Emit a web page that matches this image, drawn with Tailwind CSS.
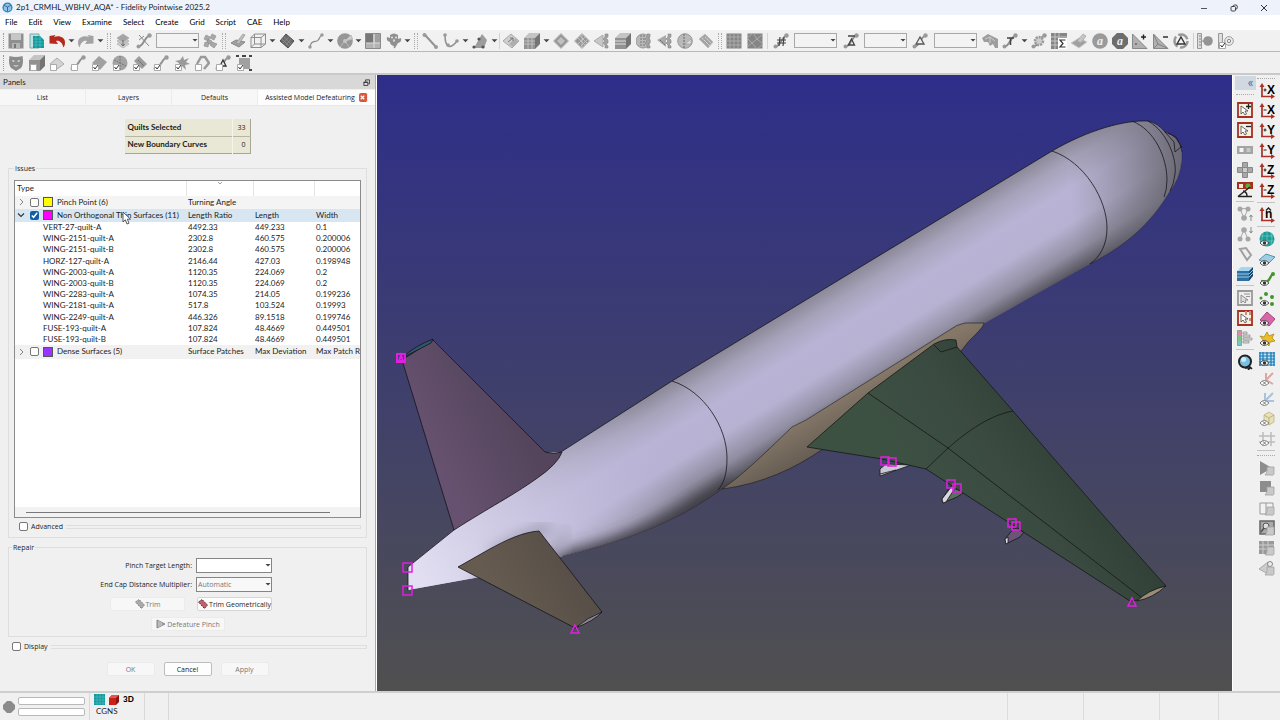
<!DOCTYPE html>
<html lang="en">
<head>
  <meta charset="UTF-8" />
  <meta name="viewport" content="width=device-width, initial-scale=1.0"/>
  <title>2p1_CRMHL_WBHV_AQA* - Fidelity Pointwise 2025.2</title>
  <script src="https://cdn.jsdelivr.net/npm/@tailwindcss/browser@4"></script>
</head>
<body class="flex h-screen flex-col overflow-hidden bg-[#f0f0f0] font-['Lato','Open_Sans',sans-serif] text-[8px] leading-[11px] text-[#1c1c1c]">

  <!-- Shared icon parts -->
  <svg class="hidden" aria-hidden="true">
    <symbol id="caret" viewBox="0 0 6 6"><path d="M.500 2h5L3 4.500z" fill="#444"/></symbol>
    <symbol id="conn" viewBox="0 0 16 16"><path d="M2.500 13.500C8 13 7 6 13 2.500" fill="none" stroke="#909090" stroke-width="2"/><circle cx="2.500" cy="13.500" r="2" fill="#9a9a9a"/><circle cx="13.500" cy="2.500" r="2.200" fill="#9a9a9a"/></symbol>
    <symbol id="quilt" viewBox="0 0 16 16"><path d="M8 .500L15.500 8 8 15.500.500 8z" fill="#979797" stroke="#bdbdbd"/></symbol>
    <symbol id="cube" viewBox="0 0 16 16"><path d="M0 5h11v11H0z" fill="#929292"/><path d="M0 5l5-5h11l-5 5z" fill="#c4c4c4"/><path d="M11 5l5-5v11l-5 5z" fill="#747474"/></symbol>
    <symbol id="check" viewBox="0 0 16 16"><path d="M1.500 9.500h6v6h-6z" fill="#fff" stroke="#aaa"/><path d="M2.500 12l1.500 2 3-4" fill="none" stroke="#333"/></symbol>
    <symbol id="box" viewBox="0 0 16 16"><path d="M1.500 9.500h6v6h-6z" fill="#fff" stroke="#aaa"/></symbol>
    <symbol id="chain" viewBox="0 0 16 16"><path d="M11 1h3v3l-2 1 2 2v3l-2 1 2 2v2h-3v-3l-2-2 2-2V8L9 6l2-2z" fill="#a2a2a2" stroke="#888" stroke-width=".6"/></symbol>
    <symbol id="axes" viewBox="0 0 16 16"><path d="M3 14V3M2 13.500h12" fill="none" stroke="#a83228" stroke-width="1.700"/><path d="M3 0L.500 4h5zM16 13.500l-4-2.500v5z" fill="#a83228"/></symbol>
    <symbol id="eye" viewBox="0 0 16 16"><path d="M1 12q4-5 9 0-5 5-9 0z" fill="#fff" stroke="#444" stroke-width=".9"/><circle cx="5.500" cy="12" r="1.700" fill="#333"/></symbol>
    <symbol id="eye-off" viewBox="0 0 16 16"><path d="M1 12q4-5 9 0-5 5-9 0z" fill="#fff" stroke="#777" stroke-width=".9"/><path d="M4 10.500l3 3m0-3l-3 3" stroke="#555" stroke-width=".8"/></symbol>
    <symbol id="scroll" viewBox="0 0 16 16"><path d="M8 7h7v7q-1 2-3 1H6q2-2 2-4z" fill="#c9c9c9" stroke="#a2a2a2" stroke-width=".8"/></symbol>
  </svg>

  <!-- Title bar -->
  <header class="flex h-[15px] shrink-0 items-center gap-[3px] bg-[#eef2fa] px-[2px]">
    <svg class="size-[11px]" viewBox="0 0 12 12"><circle cx="6" cy="6" r="5.500" fill="#2d7fb8"/><path d="M6 1.500l4 2v5l-4 2.200-4-2.200v-5z" fill="#8fc3e6"/><path d="M2 3.500l4 2 4-2M6 5.500v5" fill="none" stroke="#17507c" stroke-width=".8"/></svg>
    <h1 class="flex-1">2p1_CRMHL_WBHV_AQA* - Fidelity Pointwise 2025.2</h1>
    <div class="flex gap-[20px] pr-[9px] [&_button]:grid [&_button]:h-3 [&_button]:w-[10px] [&_button]:place-items-center [&_svg]:size-2">
      <button aria-label="Minimize"><svg viewBox="0 0 8 8"><path d="M1 4.500h6" stroke="#555"/></svg></button>
      <button aria-label="Restore"><svg viewBox="0 0 8 8" fill="none" stroke="#333" stroke-width=".9"><rect x="1" y="2.500" width="4.500" height="4.500" rx="1"/><path d="M3 2.500q0-1.500 1.500-1.500H6q1.200 0 1.200 1.200V4q0 1.200-1.500 1.200"/></svg></button>
      <button aria-label="Close"><svg viewBox="0 0 8 8"><path d="M1 1l6 6M7 1L1 7" stroke="#333"/></svg></button>
    </div>
  </header>

  <!-- Menu -->
  <nav class="flex h-[15px] shrink-0 items-center gap-[11px] bg-white px-[5px] text-black">
    <a href="#">File</a><a href="#">Edit</a><a href="#">View</a><a href="#">Examine</a><a href="#">Select</a><a href="#">Create</a><a href="#">Grid</a><a href="#">Script</a><a href="#">CAE</a><a href="#">Help</a>
  </nav>

  <!-- Main toolbar -->
  <div class="flex h-[22px] shrink-0 items-center border-b border-[#b8b8b8] bg-[#f1f1f1] [&_button]:grid [&_button]:h-5 [&_button]:place-items-center [&_svg]:size-4 [&_button.drop_svg]:size-[7px] [&_select]:block [&_select]:h-[15px] [&_select]:w-[43px] [&_select]:appearance-none [&_select]:border [&_select]:border-[#a8a8a8] [&_select]:bg-[#f3f3f3]">
    <div class="mr-[2px] ml-[3px] h-4 border-l border-dotted border-[#999]"></div>
    <div class="flex w-[99px] items-center justify-between [&_button]:w-5 [&_button.drop]:w-2">
      <button title="Save"><svg viewBox="0 0 16 16"><path d="M.500.500h15v15H.500z" fill="#8f8f8f"/><path d="M3 1h10v6H3z" fill="#c6c6c6"/><path d="M4 10h8v6H4z" fill="#b5b5b5"/><path d="M6 11h2v4H6z" fill="#777"/></svg></button>
      <button title="New grid"><svg viewBox="0 0 16 16"><path d="M1 1h9v14H1z" fill="#bfe3e3" stroke="#7aa"/><path d="M4 3h7l4 4v8H4z" fill="#12979b"/><path d="M4 6h8M4 9h11M4 12h11M7 3v12M11 3v12" stroke="#55c6c8" stroke-width=".6"/></svg></button>
      <button title="Undo"><svg viewBox="0 0 16 16"><path d="M.500 3l6-1-1.500 2c5-2 11 0 11 5.500 0 2-.500 3.500-1.500 5C13 9 10 7 7 8l2 3-8.500-.500z" fill="#b8281c"/></svg></button>
      <button class="drop" aria-label="Undo list"><svg><use href="#caret"/></svg></button>
      <button title="Redo"><svg viewBox="0 0 16 16"><path d="M15.500 3l-6-1 1.500 2C6 2 0 4 0 9.500c0 2 .500 3.500 1.500 5C3 9 6 7 9 8l-2 3 8.500-.500z" fill="#a3a3a3"/></svg></button>
      <button class="drop" aria-label="Redo list"><svg><use href="#caret"/></svg></button>
    </div>
    <div class="mr-[2px] ml-[2px] h-4 w-[4px] border-r border-l border-dotted border-[#aaa]"></div>
    <div class="flex w-[107px] items-center justify-between [&_button]:w-5">
      <button title="Layers"><svg viewBox="0 0 16 16" stroke="#aaa" stroke-width=".7"><path d="M8 7l6 4-6 4-6-4z" fill="#d0d0d0"/><path d="M8 4l6 4-6 4-6-4z" fill="#c4c4c4"/><path d="M8 1l6 4-6 4-6-4z" fill="#a5a5a5"/><path d="M8 7v6M6 11l2 2 2-2" fill="none" stroke="#555"/></svg></button>
      <button title="Show connectors"><svg viewBox="0 0 16 16"><use href="#conn"/><path d="M3 2l10 11M3 7l5-4" stroke="#888"/></svg></button>
      <span class="relative"><select aria-label="Layer"><option></option></select><svg class="absolute top-1 right-px size-[6px]!"><use href="#caret"/></svg></span>
      <button title="Layer manager"><svg viewBox="0 0 16 16" fill="#a8a8a8" stroke="#8a8a8a" stroke-width=".6"><path d="M4 2l4 2-2 4-4-2zM10 1l4 2-2 4-4-2zM3 9l4 1-1 4-4-1zM10 9l5 2-3 4-4-3zM6 6l4 2-2 3-3-2z"/></svg></button>
    </div>
    <div class="mr-[2px] ml-[2px] h-4 w-[4px] border-r border-l border-dotted border-[#aaa]"></div>
    <div class="flex w-[184px] items-center justify-between [&_button]:w-5 [&_button.drop]:w-2">
      <button title="Draw on database"><svg viewBox="0 0 16 16"><path d="M1 10l5-3 9 2-6 5z" fill="#a0a0a0" stroke="#888"/><path d="M6 10l7-9 2 1-6 9z" fill="#bdbdbd" stroke="#8b8b8b" stroke-width=".6"/></svg></button>
      <button title="Box"><svg viewBox="0 0 16 16" fill="none" stroke="#8e8e8e"><path d="M1 4.500h10v10H1zM4.500 1h11v10h-11zM1 4.500L4.500 1M11 4.500L15.500 1M11 14.500l4.500-3.500M1 14.500L4.500 11"/></svg></button>
      <button class="drop" aria-label="Shape list"><svg><use href="#caret"/></svg></button>
      <button title="Quilt"><svg viewBox="0 0 16 16"><path d="M7 1l8 7-6 7-8-7z" fill="#6b6b6b" stroke="#505050"/><path d="M5 4l7 7M3 6l7 7M10 4l-6 6M12 6l-5 6" stroke="#9b9b9b" stroke-width=".6"/></svg></button>
      <button class="drop" aria-label="Quilt list"><svg><use href="#caret"/></svg></button>
      <button title="Curve"><svg viewBox="0 0 16 16"><path d="M2 14c1-6 4-5 7-6s2-5 5-6" fill="none" stroke="#8c8c8c" stroke-width="1.300"/><circle cx="2" cy="14" r="1.700" fill="#999"/><circle cx="14" cy="2" r="1.700" fill="#999"/></svg></button>
      <button class="drop" aria-label="Curve list"><svg><use href="#caret"/></svg></button>
      <button title="Surface"><svg viewBox="0 0 16 16"><circle cx="8" cy="8" r="7.800" fill="#979797"/><path d="M8 8l6-6 1.500 4zM8 8l-5 6M8 8l4 6" fill="#ccc" stroke="#bbb"/><circle cx="8" cy="8" r="2" fill="#c5c5c5"/></svg></button>
      <button class="drop" aria-label="Surface list"><svg><use href="#caret"/></svg></button>
      <button title="Domains"><svg viewBox="0 0 16 16"><path d="M.500.500h15v15H.500z" fill="#b4b4b4" stroke="#8a8a8a"/><path d="M1 1h7v9H1z" fill="#777"/><path d="M10 1h5v9h-5z" fill="#a0a0a0"/><path d="M1 10h14M9 1v14" stroke="#ddd"/></svg></button>
      <button title="Overset"><svg viewBox="0 0 16 16"><path d="M4 2q4-3 8 0v4l3-1q1 4-3 5l-3 5q-2 1-1-2-4-1-4-4Q0 8 1 4l3 1z" fill="#909090"/><circle cx="6" cy="4.500" r=".9" fill="#eee"/><circle cx="10" cy="4.500" r=".9" fill="#eee"/><ellipse cx="8" cy="7.500" rx="1" ry="1.300" fill="#ddd"/></svg></button>
      <button class="drop" aria-label="Overset list"><svg><use href="#caret"/></svg></button>
    </div>
    <div class="mr-[2px] ml-[2px] h-4 w-[4px] border-r border-l border-dotted border-[#aaa]"></div>
    <div class="flex w-[78px] items-center justify-between [&_button]:w-5 [&_button.drop]:w-2">
      <button title="Two point curve"><svg viewBox="0 0 16 16"><path d="M3 2l11 12" stroke="#929292" stroke-width="2"/><circle cx="2.500" cy="2" r="2" fill="#9a9a9a"/><circle cx="14" cy="14" r="2" fill="#9a9a9a"/></svg></button>
      <button title="Curve through points"><svg viewBox="0 0 16 16"><path d="M2 2c0 14 6 14 12 6" fill="none" stroke="#929292" stroke-width="1.600"/><circle cx="2" cy="2" r="1.800" fill="#999"/><circle cx="5" cy="12" r="1.800" fill="#999"/><circle cx="14" cy="8" r="1.800" fill="#999"/></svg></button>
      <button class="drop" aria-label="Curve type"><svg><use href="#caret"/></svg></button>
      <button title="Surface from points"><svg viewBox="0 0 16 16"><path d="M10 1l5 6-3 8H2l5-9z" fill="#9c9c9c"/><g fill="#555"><circle cx="7" cy="6" r="1.600"/><circle cx="2" cy="14" r="1.600"/><circle cx="11" cy="14" r="1.600"/></g></svg></button>
      <button class="drop" aria-label="Surface type"><svg><use href="#caret"/></svg></button>
    </div>
    <div class="mx-px h-4 border-l border-[#d4d4d4]"></div>
    <div class="flex w-[215px] items-center justify-between [&_button]:w-5 [&_button.drop]:w-2">
      <button title="Assemble domain"><svg viewBox="0 0 16 16"><path d="M0 8l8-7 8 7-7 7z" fill="#cfcfcf" stroke="#a8a8a8"/><path d="M6 11l7-6 2 4-5 5z" fill="#aeaeae"/><path d="M5 9l5-4M10 5v3M10 5H7" stroke="#777" fill="none"/></svg></button>
      <button title="Assemble block"><svg viewBox="0 0 16 16"><use href="#cube"/><path d="M0 8h11M0 11h11M4 5v11M8 5v11" stroke="#d0d0d0" stroke-width=".7"/></svg></button>
      <button class="drop" aria-label="Block list"><svg><use href="#caret"/></svg></button>
      <button title="Structured domain"><svg viewBox="0 0 16 16"><use href="#quilt"/><path d="M8 4l4 4-4 4-4-4z" fill="#c0c0c0"/></svg></button>
      <button title="Unstructured domain"><svg viewBox="0 0 16 16"><use href="#quilt"/><path d="M4 5l7 7M6 3l7 7M11 4l-7 7M13 7l-6 6M8 1v14" stroke="#d0d0d0" stroke-width=".7"/></svg></button>
      <button title="Extrude domain"><svg viewBox="0 0 16 16"><path d="M0 8l9-6v12z" fill="#c7c7c7" stroke="#aaa"/><use href="#chain"/></svg></button>
      <button title="Extrude block"><svg viewBox="0 0 16 16"><use href="#cube"/><path d="M0 8h11M0 11h11" stroke="#ddd"/></svg></button>
      <button title="Rotate extrusion"><svg viewBox="0 0 16 16"><circle cx="7" cy="8" r="7" fill="#b9b9b9" stroke="#999"/><path d="M5 2v12M8 2v12" stroke="#777" stroke-dasharray="2 1"/><use href="#chain"/></svg></button>
      <button title="Path extrusion"><svg viewBox="0 0 16 16"><path d="M0 7l9-5v12z" fill="#a9a9a9"/><path d="M3 7l5 5" stroke="#666" stroke-dasharray="2 1"/><use href="#chain"/></svg></button>
      <button title="Revolve"><svg viewBox="0 0 16 16"><circle cx="8" cy="8" r="7.300" fill="#b9b9b9" stroke="#999"/><path d="M7 1v14" stroke="#666" stroke-dasharray="2 1"/><path d="M8 11l6-5v5z" fill="#ddd" stroke="#999" stroke-width=".6"/></svg></button>
      <button title="Translate"><svg viewBox="0 0 16 16"><path d="M1 6l6-5 8 8-5 6z" fill="#a4a4a4" stroke="#c0c0c0"/><path d="M4 5l8 8M7 4l6 6" stroke="#ddd" stroke-dasharray="2 1"/></svg></button>
    </div>
    <div class="mr-[2px] ml-[2px] h-4 w-[4px] border-r border-l border-dotted border-[#aaa]"></div>
    <div class="flex w-[41px] items-center justify-between [&_button]:w-5">
      <button title="Structured"><svg viewBox="0 0 16 16"><path d="M.500.500h15v15H.500z" fill="#858585"/><path d="M0 4h16M0 8h16M0 12h16M4 0v16M8 0v16M12 0v16" stroke="#b4b4b4" stroke-width=".8"/></svg></button>
      <button title="Unstructured"><svg viewBox="0 0 16 16"><path d="M.500.500h15v15H.500z" fill="#858585"/><path d="M0 5l6-5 4 6 6-5M0 5l5 5 5-4 6 5M0 14l5-4 5 6 6-5" fill="none" stroke="#b4b4b4" stroke-width=".8"/></svg></button>
    </div>
    <div class="mr-[3px] ml-[2px] h-4 border-l border-[#d4d4d4]"></div>
    <div class="flex w-[420px] items-center justify-between [&_button]:w-5 [&_button.drop]:w-2 [&_span]:mx-[3px]">
      <button title="Dimension"><svg viewBox="0 0 16 16"><use href="#conn"/><path d="M7 4L6 13M11 4l-1 9M4 7h9M4 10h9" stroke="#444" stroke-width="1.200"/></svg></button>
      <span class="relative"><select aria-label="Dimension"><option></option></select><svg class="absolute top-1 right-px size-[6px]!"><use href="#caret"/></svg></span>
      <button title="Average spacing"><svg viewBox="0 0 16 16"><use href="#conn"/><path d="M5 3h7M8.500 6l3 6h-6z" fill="none" stroke="#444" stroke-width="1.300"/></svg></button>
      <span class="relative"><select aria-label="Average spacing"><option></option></select><svg class="absolute top-1 right-px size-[6px]!"><use href="#caret"/></svg></span>
      <button title="Spacing"><svg viewBox="0 0 16 16"><use href="#conn"/><path d="M8 4l4 7H4z" fill="#eee" stroke="#555" stroke-width="1.300"/></svg></button>
      <span class="relative"><select aria-label="Spacing"><option></option></select><svg class="absolute top-1 right-px size-[6px]!"><use href="#caret"/></svg></span>
      <button title="Split"><svg viewBox="0 0 16 16"><path d="M0 5l6-4 10 5v9h-3l-2-4-3 2-2-4H2z" fill="#9d9d9d"/><path d="M3 6l5-2 5 4M8 4v6" fill="none" stroke="#ccc"/></svg></button>
      <button title="Trim"><svg viewBox="0 0 16 16"><use href="#conn"/><path d="M5 5h7M8.500 5v7" stroke="#444" stroke-width="1.500"/></svg></button>
      <button class="drop" aria-label="Trim list"><svg><use href="#caret"/></svg></button>
      <button title="Solver"><svg viewBox="0 0 16 16"><use href="#conn"/><circle cx="8" cy="8" r="4" fill="#ccc" stroke="#999" stroke-width="2.500" stroke-dasharray="2 1"/></svg></button>
      <button title="Statistics"><svg viewBox="0 0 16 16"><path d="M0 0h16v16H0z" fill="#858585"/><path d="M0 4h16M0 8h16M0 12h16M4 0v16M8 0v16" stroke="#c5c5c5"/><path d="M7 5h9v11H7z" fill="#fff"/><path d="M14.500 7H9l3 3.500L9 14h5.500" fill="none" stroke="#333" stroke-width="1.200"/></svg></button>
      <button title="Apply attributes"><svg viewBox="0 0 16 16"><path d="M0 10l8-5 8 4-8 6z" fill="#a0a0a0" stroke="#ccc"/><path d="M6 8l6-7 3 2-5 7z" fill="#c5c5c5" stroke="#999" stroke-width=".6"/></svg></button>
      <button title="Attributes"><svg viewBox="0 0 16 16"><circle cx="8" cy="8" r="7.800" fill="#9a9a9a"/><text x="8" y="12" text-anchor="middle" font-family="Liberation Serif" font-style="italic" font-weight="bold" font-size="12" fill="#eee">a</text></svg></button>
      <button title="Default attributes"><svg viewBox="0 0 16 16"><path d="M5 0h6l5 5v6l-5 5H5l-5-5V5z" fill="#6d6d6d"/><text x="8" y="12" text-anchor="middle" font-family="Liberation Serif" font-style="italic" font-weight="bold" font-size="12" fill="#eee">a</text></svg></button>
      <button title="Refine"><svg viewBox="0 0 16 16"><path d="M.500 1v14.500H15z" fill="#b0b0b0" stroke="#888"/><circle cx="4" cy="11" r="1" fill="#666"/><path d="M9 4h5M11.500 1.500v5" stroke="#222" stroke-width="1.400"/></svg></button>
      <button title="Coarsen"><svg viewBox="0 0 16 16"><path d="M.500 1v14.500H15z" fill="#b0b0b0" stroke="#888"/><path d="M1 2l4 9 9 4M1 15l4-4" fill="none" stroke="#777" stroke-width=".8"/><path d="M10 4h5" stroke="#222" stroke-width="1.400"/></svg></button>
      <button title="Remesh"><svg viewBox="0 0 16 16"><circle cx="8" cy="8" r="6.500" fill="none" stroke="#999" stroke-width="2.500" stroke-dasharray="11 2.500"/><path d="M8 4l4 7H4z" fill="#eee" stroke="#333" stroke-width="1.400"/></svg></button>
    </div>
    <div class="mr-px ml-[2px] h-4 border-l border-[#d0d0d0]"></div>
    <div class="flex w-[41px] items-center justify-between [&_button]:w-5">
      <button title="Measure"><svg viewBox="0 0 16 16"><path d="M.500.500h4v15h-4z" fill="#ddd" stroke="#999"/><path d="M2 3h2M2 6h2M2 9h2M2 12h2M5 8h3" stroke="#888"/><circle cx="11" cy="8" r="4.800" fill="#949494"/></svg></button>
      <button title="Examine metric"><svg viewBox="0 0 16 16"><path d="M.500.500h4v15h-4z" fill="#ddd" stroke="#999"/><circle cx="11" cy="8" r="4.300" fill="#eee" stroke="#999"/><circle cx="11" cy="8" r="1.700" fill="none" stroke="#888"/><use href="#check"/></svg></button>
    </div>
  </div>

  <!-- Mask toolbar -->
  <div class="flex h-[23px] shrink-0 items-center border-b-2 border-[#c9c9c9] [&_button]:grid [&_button]:h-5 [&_button]:w-5 [&_button]:place-items-center [&_svg]:size-4">
    <div class="mr-[2px] ml-[3px] h-4 border-l border-dotted border-[#999]"></div>
    <div class="flex w-[248px] items-center justify-between">
      <button title="Mask"><svg viewBox="0 0 16 16"><path d="M1.500 1q6.500 2 13 0Q16 9 13 13l-5 3-5-3Q0 9 1.500 1z" fill="#8b8b8b"/><path d="M4 5l3 1-2 1zM12 5L9 6l2 1zM5 10q3 3 6 0-3 1-6 0z" fill="#eee"/></svg></button>
      <button title="Blocks"><svg viewBox="0 0 16 16"><use href="#cube"/><use href="#box"/></svg></button>
      <button title="Domains"><svg viewBox="0 0 16 16"><path d="M1 9l7-6 7 6-7 5z" fill="#d4d4d4" stroke="#aaa"/><use href="#box"/></svg></button>
      <button title="Connectors"><svg viewBox="0 0 16 16"><use href="#conn"/><use href="#box"/></svg></button>
      <button title="Database"><svg viewBox="0 0 16 16"><path d="M1 8l7-7 8 6-7 8z" fill="#a0a0a0"/><use href="#check"/></svg></button>
      <button title="Models"><svg viewBox="0 0 16 16"><circle cx="8" cy="8" r="7.500" fill="#a3a3a3"/><path d="M8 1v14M2 5l12 6" stroke="#777" stroke-dasharray="2 1"/><use href="#check"/></svg></button>
      <button title="Quilts"><svg viewBox="0 0 16 16"><path d="M2 6l5-5 8 8-5 5z" fill="#9c9c9c"/><path d="M6 5l6 6" stroke="#666" stroke-dasharray="2 1"/><use href="#check"/></svg></button>
      <button title="Curves"><svg viewBox="0 0 16 16"><use href="#conn"/><use href="#check"/></svg></button>
      <button title="Points"><svg viewBox="0 0 16 16"><path d="M9 1l1 4 5-2-3 4 4 2-5 1 1 5-4-4-4 1 1-4-4-2 5-1z" fill="#9a9a9a"/><use href="#check"/></svg></button>
      <button title="Boundaries"><svg viewBox="0 0 16 16"><path d="M3 9l4-7h4l4 6-5 6" fill="none" stroke="#9a9a9a" stroke-width="2.500"/><use href="#box"/></svg></button>
      <button title="Spacings"><svg viewBox="0 0 16 16"><use href="#conn"/><path d="M8 5l3 6H5z" fill="#eee" stroke="#333" stroke-width="1.300"/><use href="#box"/></svg></button>
      <button title="Sources"><svg viewBox="0 0 16 16"><path d="M3 3h11v11H3z" fill="#a0a0a0"/><path d="M0 1h3M13 1h3M13 15h3M6 1h4" stroke="#444" stroke-width="2"/><use href="#check"/></svg></button>
    </div>
  </div>

  <main class="flex min-h-0 flex-1">
    <!-- Panels -->
    <aside class="flex w-[375px] shrink-0 flex-col">
      <div class="flex h-[14px] shrink-0 items-center justify-between bg-[#d8d8d8] pr-[5px] pl-[3px]">
        <h2>Panels</h2>
        <button aria-label="Float panel"><svg class="size-[7px]" viewBox="0 0 8 8" fill="none" stroke="#333"><path d="M1 3.500h4.500v4H1zM3 3V1h4.500v4.500H6M1 4h4"/></svg></button>
      </div>
      <div role="tablist" class="mt-px flex h-4 shrink-0 border-b border-[#e8e8e8] bg-[#f7f7f7] font-['Open_Sans',sans-serif] text-[7px] [&_button]:w-[86px] [&_button]:border-r [&_button]:border-[#ececec]">
        <button role="tab">List</button>
        <button role="tab">Layers</button>
        <button role="tab">Defaults</button>
        <div class="flex flex-1 items-center justify-center gap-[4px] bg-[#fdfdfd]">
          <span role="tab" aria-selected="true">Assisted Model Defeaturing</span>
          <button aria-label="Close tab" class="grid size-[9px] max-w-[9px] place-items-center rounded-[2px] bg-[#d9583c]"><svg class="size-[7px]" viewBox="0 0 8 8"><path d="M2 2l4 4M6 2L2 6" stroke="#fff" stroke-width="1.400"/></svg></button>
        </div>
      </div>

      <form class="flex min-h-0 flex-1 flex-col px-2 pb-[15px] font-['Open_Sans',sans-serif] text-[7px]" onsubmit="return false">
        <table class="mx-auto mt-[13px] w-[126px] shrink-0 border-r border-b border-[#a9a793] bg-[#e9e7d5] [&_td]:border-l [&_td]:border-[#f6f5ea] [&_td]:pr-1 [&_td]:text-right [&_th]:pl-[3px] [&_th]:text-left [&_th]:font-['Lato','Open_Sans',sans-serif] [&_th]:text-[8px] [&_th]:font-bold [&_th]:whitespace-nowrap [&_tr]:h-[17px]">
          <tr class="border-b border-[#b9b7a2]"><th scope="row">Quilts Selected</th><td>33</td></tr>
          <tr><th scope="row">New Boundary Curves</th><td>0</td></tr>
        </table>

        <!-- Issues -->
        <fieldset class="mt-[9px] flex min-h-0 min-w-0 flex-1 flex-col border border-[#dedede] px-[5px] pt-[5px] pb-[5px]">
          <legend class="px-[1px] leading-[12px]">Issues</legend>
          <div class="relative flex min-h-0 flex-1 flex-col border border-[#8b8b8b] bg-white font-['Lato','Open_Sans',sans-serif] text-[8px]">
            <div class="min-h-0 flex-1 overflow-hidden">
              <table class="h-[178px] w-[390px] table-fixed text-left whitespace-nowrap [&_.group_td:first-child]:pl-[2px] [&_tbody_tr]:h-[11px] [&_tbody_tr.group]:h-[13px] [&_td]:pl-[2px] [&_td:first-child]:pl-[28px] [&_th]:font-normal">
                <colgroup><col class="w-[171px]"><col class="w-[67px]"><col class="w-[61px]"><col></colgroup>
                <thead>
                  <tr class="h-[15px] [&_th]:border-r [&_th]:border-[#e4e4e4]">
                    <th class="pl-[2px]">Type</th>
                    <th aria-label="Value" class="align-top"><svg class="mx-auto h-1 w-[6px]" viewBox="0 0 6 4"><path d="M1 1l2 2 2-2" fill="none" stroke="#888" stroke-width=".8"/></svg></th>
                    <th></th><th></th>
                  </tr>
                </thead>
                <tbody>
                  <tr class="group bg-[#f4f4f4]">
                    <td><label class="flex items-center gap-[4px]"><svg class="mr-px size-2" viewBox="0 0 8 8"><path d="M3 1l3 3-3 3" fill="none" stroke="#777" stroke-width=".9"/></svg><input type="checkbox" class="size-[9px] appearance-none rounded-[2px] border border-[#777] bg-white"><i class="size-[10px] border border-[#555] bg-[#ffff00]"></i>Pinch Point (6)</label></td>
                    <td>Turning Angle</td><td></td><td></td>
                  </tr>
                  <tr class="group bg-[#d8e6f2]">
                    <td><label class="flex items-center gap-[4px]"><svg class="mr-px size-2" viewBox="0 0 8 8"><path d="M1 2.500l3 3 3-3" fill="none" stroke="#333" stroke-width="1.100"/></svg><input type="checkbox" checked class="size-[9px] accent-[#0f5ea8]"><i class="size-[10px] border border-[#555] bg-[#ff00ff]"></i>Non Orthogonal Thin Surfaces (11)</label></td>
                    <td>Length Ratio</td><td>Length</td><td>Width</td>
                  </tr>
                  <tr><td>VERT-27-quilt-A</td><td>4492.33</td><td>449.233</td><td>0.1</td></tr>
                  <tr><td>WING-2151-quilt-A</td><td>2302.8</td><td>460.575</td><td>0.200006</td></tr>
                  <tr><td>WING-2151-quilt-B</td><td>2302.8</td><td>460.575</td><td>0.200006</td></tr>
                  <tr><td>HORZ-127-quilt-A</td><td>2146.44</td><td>427.03</td><td>0.198948</td></tr>
                  <tr><td>WING-2003-quilt-A</td><td>1120.35</td><td>224.069</td><td>0.2</td></tr>
                  <tr><td>WING-2003-quilt-B</td><td>1120.35</td><td>224.069</td><td>0.2</td></tr>
                  <tr><td>WING-2283-quilt-A</td><td>1074.35</td><td>214.05</td><td>0.199236</td></tr>
                  <tr><td>WING-2181-quilt-A</td><td>517.8</td><td>103.524</td><td>0.19993</td></tr>
                  <tr><td>WING-2249-quilt-A</td><td>446.326</td><td>89.1518</td><td>0.199746</td></tr>
                  <tr><td>FUSE-193-quilt-A</td><td>107.824</td><td>48.4669</td><td>0.449501</td></tr>
                  <tr><td>FUSE-193-quilt-B</td><td>107.824</td><td>48.4669</td><td>0.449501</td></tr>
                  <tr class="group bg-[#f1f1f1]">
                    <td><label class="flex items-center gap-[4px]"><svg class="mr-px size-2" viewBox="0 0 8 8"><path d="M3 1l3 3-3 3" fill="none" stroke="#777" stroke-width=".9"/></svg><input type="checkbox" class="size-[9px] appearance-none rounded-[2px] border border-[#777] bg-white"><i class="size-[10px] border border-[#555] bg-[#9933ff]"></i>Dense Surfaces (5)</label></td>
                    <td>Surface Patches</td><td>Max Deviation</td><td>Max Patch Ratio</td>
                  </tr>
                </tbody>
              </table>
            </div>
            <div class="flex h-[10px] shrink-0 items-center bg-[#f2f2f2] pr-[30px] pl-[11px]"><div class="h-px flex-1 bg-[#777]"></div></div>
            <!-- Mouse pointer -->
            <svg class="absolute top-[30px] left-[107px] h-[14px] w-[9px]" viewBox="0 0 9 14"><path d="M1 1v10l2.300-2.200L5 13l2-.8-1.700-4H8.500z" fill="#fff" stroke="#333" stroke-width=".8"/></svg>
          </div>
          <div class="mt-[3px] flex items-center gap-[3px] pl-[5px]">
            <input id="advanced" type="checkbox" class="size-[9px] appearance-none rounded-[2px] border border-[#777] bg-white">
            <label for="advanced">Advanced</label>
            <div class="h-1 flex-1 border border-l-0 border-[#dedede]"></div>
          </div>
        </fieldset>

        <!-- Repair -->
        <fieldset class="mt-1 flex min-w-0 shrink-0 flex-col border border-[#dedede] pb-[5px]">
          <legend class="ml-[3px] px-[1px]">Repair</legend>
          <div class="grid grid-cols-[183px_76px] items-center gap-x-[4px] gap-y-[4px] pt-[5px] [&_label]:text-right">
            <label for="pinch">Pinch Target Length:</label>
            <div class="relative"><input id="pinch" type="text" class="block h-[15px] w-full border border-[#858585] bg-white px-[2px]"><svg class="absolute top-1 right-px size-[6px]"><use href="#caret"/></svg></div>
            <label for="cap">End Cap Distance Multiplier:</label>
            <div class="relative"><select id="cap" class="block h-[15px] w-full appearance-none border border-[#858585] bg-[#f8f8f8] px-[1px] text-[#777]"><option>Automatic</option></select><svg class="absolute top-1 right-px size-[6px]"><use href="#caret"/></svg></div>
          </div>
          <div class="mt-[5px] flex gap-[12px] pl-[101px] [&_button]:flex [&_button]:h-[14px] [&_button]:w-[75px] [&_button]:items-center [&_button]:justify-center [&_button]:rounded-[2px] [&_button]:whitespace-nowrap">
            <button disabled class="gap-px border border-[#ebebeb] bg-[#f7f7f7] text-[#777]"><svg class="size-[10px]" viewBox="0 0 10 10"><path d="M.500 3l3.500-2.500L9.500 6 6.500 9.500z" fill="#aaa" stroke="#777" stroke-dasharray="1.500 1"/></svg>Trim</button>
            <button class="gap-px border border-[#d5d5d5] bg-[#fdfdfd]"><svg class="size-[10px] shrink-0" viewBox="0 0 10 10"><path d="M.500 3l3.500-2.500L9.500 6 6.500 9.500z" fill="#c8606c" stroke="#4c1c20" stroke-dasharray="1.500 1"/></svg>Trim Geometrically</button>
          </div>
          <button disabled class="mt-[6px] ml-[142px] flex h-[14px] w-[74px] items-center justify-center gap-px rounded-[2px] border border-[#ebebeb] bg-[#f7f7f7] whitespace-nowrap text-[#777]"><svg class="size-[10px] shrink-0" viewBox="0 0 10 10"><path d="M1 1l8 4-8 4z" fill="#aaa" stroke="#888"/><path d="M3 2v6M5 3v4" stroke="#ddd" stroke-width=".7"/></svg>Defeature Pinch</button>
        </fieldset>

        <div class="mt-1 flex shrink-0 items-center gap-[3px] pl-1">
          <input id="display" type="checkbox" class="size-[9px] appearance-none rounded-[2px] border border-[#777] bg-white">
          <label for="display">Display</label>
          <div class="h-1 flex-1 border border-l-0 border-[#dedede]"></div>
        </div>
        <div class="mt-[10px] flex shrink-0 justify-center gap-[9px] [&_button]:h-[14px] [&_button]:w-[48px] [&_button]:rounded-[2px] [&_button]:border">
          <button disabled class="border-[#ebebeb] bg-[#f7f7f7] text-[#777]">OK</button>
          <button class="border-[#bdbdbd] bg-[#fdfdfd]">Cancel</button>
          <button disabled class="border-[#ebebeb] bg-[#f7f7f7] text-[#777]">Apply</button>
        </div>
      </form>
    </aside>
    <div class="w-[2px] shrink-0 border-l border-[#a8a8b8] bg-white"></div>

    <!-- 3D view -->
    <section class="min-w-0 flex-1 bg-linear-to-b/srgb from-[#2e2e8a] to-[#505050]">
      <svg class="size-full" viewBox="377 75 855 616" aria-label="Aircraft model">
        <defs>
          <linearGradient id="hull" gradientUnits="userSpaceOnUse" x1="862" y1="266" x2="924" y2="368">
            <stop offset="0" stop-color="#8b8898"/><stop offset=".15" stop-color="#a7a3bb"/><stop offset=".35" stop-color="#b9b4d5"/><stop offset=".6" stop-color="#b7b2d2"/><stop offset=".82" stop-color="#918ea2"/><stop offset="1" stop-color="#4c4b52"/>
          </linearGradient>
          <linearGradient id="tail" gradientUnits="userSpaceOnUse" x1="408" y1="560" x2="660" y2="430">
            <stop offset="0" stop-color="#e2dff2"/><stop offset=".45" stop-color="#cbc7e2" stop-opacity=".9"/><stop offset="1" stop-color="#bbb6d8" stop-opacity="0"/>
          </linearGradient>
          <linearGradient id="nose" gradientUnits="userSpaceOnUse" x1="1070" y1="190" x2="1180" y2="180">
            <stop offset="0" stop-color="#77747f" stop-opacity="0"/><stop offset="1" stop-color="#66646e" stop-opacity=".9"/>
          </linearGradient>
          <linearGradient id="fin" gradientUnits="userSpaceOnUse" x1="425" y1="440" x2="505" y2="400"><stop offset="0" stop-color="#675170"/><stop offset="1" stop-color="#54455c"/></linearGradient>
          <linearGradient id="wing" gradientUnits="userSpaceOnUse" x1="900" y1="460" x2="1010" y2="380"><stop offset="0" stop-color="#3d5143"/><stop offset=".6" stop-color="#3a4a41"/><stop offset="1" stop-color="#334238"/></linearGradient>
          <linearGradient id="stab" gradientUnits="userSpaceOnUse" x1="500" y1="600" x2="570" y2="560"><stop offset="0" stop-color="#665b4f"/><stop offset="1" stop-color="#574f48"/></linearGradient>
          <linearGradient id="fairing" gradientUnits="userSpaceOnUse" x1="780" y1="430" x2="805" y2="475"><stop offset="0" stop-color="#857869"/><stop offset="1" stop-color="#5d544c"/></linearGradient>
          <filter id="soft" x="-20%" y="-20%" width="140%" height="140%"><feGaussianBlur stdDeviation="7"/></filter>
          <clipPath id="body"><path d="M408 567L454 530 547 453 561 452 672 381 1052 151C1090 129 1125 120 1148 121Q1158 123 1165 132 1180 136 1182 152C1182 170 1178 180 1170 191 1150 225 1125 246 1090 264L985 323 722 489C690 512 650 535 563 556L480 577 408 590z"/></clipPath>
        </defs>

        <!-- Fuselage -->
        <g clip-path="url(#body)">
          <path d="M377 75h855v616H377z" fill="url(#hull)"/>
          <path d="M400 370h330v250H400z" fill="url(#tail)"/>
          <path d="M1040 100h150v190h-150z" fill="url(#nose)"/>
          <path d="M480 592L565 562C650 542 690 517 735 486" fill="none" stroke="#3f3e46" stroke-width="22" filter="url(#soft)"/>
          <path d="M490 556q30-20 60-28" fill="none" stroke="#8f8ba0" stroke-width="8" filter="url(#soft)"/>
          <path d="M550 560l18-30" stroke="#aaa6bd" stroke-width="10" filter="url(#soft)"/>
        </g>
        <g fill="none" stroke="#17171c" stroke-width=".8">
          <path d="M408 590V567L454 530M547 453Q553 456 561 452L672 381 1052 151C1090 129 1125 120 1148 121Q1158 123 1165 132 1180 136 1182 152"/>
          <path d="M672 381C704 391 727 427 727 458 727 474 724 483 718 490M1052 151C1085 162 1107 200 1107 228 1107 245 1100 257 1090 264M1132 121C1155 130 1167 158 1167 180Q1167 190 1164 197M1148 121C1168 132 1177 160 1175 174Q1174 184 1170 191M1165 132L1174 142 1175 152 1182 146M1168 133L1176 137 1182 148"/>
          <path d="M1182 152C1182 170 1178 180 1170 191 1150 225 1125 246 1090 264M722 489C690 512 650 535 563 556" stroke-opacity=".45"/>
        </g>

        <!-- Fin and stabilizer -->
        <g stroke="#141418" stroke-width=".8" stroke-linejoin="round">
          <path d="M402 360L433 340 545 452Q553 455 562 452 558 464 536 479C512 496 490 507 454 530z" fill="url(#fin)"/>
          <path d="M404 356Q415 346 433 339L431 343 406 356z" fill="#2f5570"/>
          <path d="M458 567L488 550C506 540 523 532 539 531L602 612 575 628z" fill="url(#stab)"/>
          <path d="M575 628Q588 617 602 612 594 621 575 628z" fill="#8b8194"/>
        </g>

        <!-- Wing and belly fairing -->
        <g stroke="#141814" stroke-width=".8" stroke-linejoin="round">
          <path d="M722 489C740 477 760 458 792 427Q796 425 806 420L948 331Q957 324 965 323H984Q984 326 976 334 968 341 962 350L820 451C795 468 762 484 722 489z" fill="url(#fairing)" stroke-opacity=".7"/>
          <path d="M880 476V469L886 464 911 465zM880 474L896 470" fill="#c9c6d6"/>
          <path d="M943 503L942 499 950 487 965 492 957 497z" fill="#57705f"/><path d="M943 503L942 499 952 486 955 488 946 502z" fill="#d8d6e2"/>
          <path d="M1006 544L1005 539 1014 528 1024 532 1020 537z" fill="#6b5475"/><path d="M1006 544L1005 539 1008 537 1008 543z" fill="#e5e3ee"/>
          <path d="M807 447L868 393 934 344Q945 338 956 340L957 347 1013 411C1060 466 1120 535 1166 586Q1150 590 1138 600L1130 601 926 469 882 459z" fill="url(#wing)"/>
          <path d="M1137 601Q1148 590 1166 586 1153 598 1137 601z" fill="#9b8b79"/>
          <path d="M868 393L948 448 1141 597M1013 411C985 416 960 438 948 448L926 469M934 345L941 352 957 347" fill="none"/>
        </g>

        <!-- Issue markers -->
        <g fill="none" stroke="#e01fe0" stroke-width="1.500">
          <path d="M397 354h8v8h-8zM399 361l2-6 2 6z" stroke-width="2"/>
          <path d="M403 563h9v9h-9zM403 586h9v9h-9z"/>
          <path d="M575 625l4 8h-8zM1132 598l4 8h-8z"/>
          <path d="M881 457h8v8h-8zM888 458h8v8h-8zM947 480h8v8h-8zM953 484h8v8h-8zM1008 519h8v8h-8zM1012 522h8v8h-8z"/>
        </g>
      </svg>
    </section>

    <!-- Select toolbar -->
    <div class="flex w-[25px] shrink-0 flex-col items-center border-l border-white pt-px [&_button]:grid [&_button]:h-5 [&_button]:w-5 [&_button]:place-items-center [&_hr]:my-px [&_hr]:h-[2px] [&_hr]:w-[18px] [&_hr]:border-[#c4c4c4] [&_svg]:size-4">
      <div class="grid h-[14px] w-[21px] justify-items-end bg-[#d2d8e0] text-[14px] leading-[12px] text-[#3c78bd]"><a href="#" aria-label="Collapse" class="pr-[2px]">«</a></div>
      <div class="my-[4px] h-[2px] w-[18px] border-t border-dotted border-[#aaa]"></div>
      <button title="Select add"><svg viewBox="0 0 16 16"><path d="M1 1h14v14H1z" fill="#f6efe4" stroke="#a5301f" stroke-width="1.800"/><path d="M4 4v8l2-2 2 3 1.500-1L8 9h3z" fill="#fff" stroke="#444" stroke-width=".8"/><path d="M9 4.500h5M11.500 2v5" stroke="#222" stroke-width="1.300"/></svg></button>
      <button title="Select remove"><svg viewBox="0 0 16 16"><path d="M1 1h14v14H1z" fill="#f6efe4" stroke="#a5301f" stroke-width="1.800"/><path d="M4 4v8l2-2 2 3 1.500-1L8 9h3z" fill="#fff" stroke="#444" stroke-width=".8"/><path d="M9 4.500h5" stroke="#222" stroke-width="1.300"/></svg></button>
      <button title="Select toggle"><svg viewBox="0 0 16 16"><path d="M0 4h16v8H0z" fill="#a4a4a4"/><path d="M2.500 6h4v4h-4z" fill="#f4f4f4"/><path d="M9.500 6h4v4h-4z" fill="#c8c8c8"/></svg></button>
      <button title="Select adjacent"><svg viewBox="0 0 16 16"><path d="M5.500.500h5v5h5v5h-5v5h-5v-5h-5v-5h5z" fill="#a8a8a8" stroke="#888"/><path d="M5.500 5.500h5v5h-5z" fill="#ccc" stroke="#888"/></svg></button>
      <button title="Select by angle"><svg viewBox="0 0 16 16"><path d="M0 0h16v7H0z" fill="#a5301f"/><path d="M2 2h4v4H2z" fill="#f0eadc"/><circle cx="11" cy="4" r="2.500" fill="#5fae3c"/><path d="M1 14.500h14M1 14.500L13 5M6 9q4 1 4 5" fill="none" stroke="#222" stroke-width="1.400"/></svg></button>
      <hr>
      <button title="Move up"><svg viewBox="0 0 16 16" fill="#a6a6a6"><path d="M3 3l4 9 4-9M3 3l9-1M7 12h3" fill="none" stroke="#aaa"/><circle cx="3" cy="3" r="2.500"/><circle cx="11" cy="3" r="2.500"/><circle cx="7" cy="12" r="2.800"/><path d="M14 15V9M12.500 11L14 9l1.500 2" fill="none" stroke="#888"/></svg></button>
      <button title="Move down"><svg viewBox="0 0 16 16" fill="#a6a6a6"><path d="M3 13l4-9 4 9" fill="none" stroke="#aaa"/><circle cx="3" cy="13" r="2.500"/><circle cx="11" cy="13" r="2.500"/><circle cx="7" cy="4" r="2.800"/><path d="M14 1v6M12.500 5L14 7l1.500-2" fill="none" stroke="#888"/></svg></button>
      <button title="Boundary"><svg viewBox="0 0 16 16"><path d="M3 3l6-1 5 7-4 5z" fill="#eee" stroke="#a0a0a0" stroke-width="2"/></svg></button>
      <button title="Layer stack"><svg viewBox="0 0 16 16"><path d="M0 5l4-4h12l-4 4z" fill="#a5d8f0"/><path d="M0 5h12v10H0z" fill="#2f6ea0"/><path d="M12 5l4-4v9l-4 5z" fill="#174668"/><path d="M0 8h12l4-4M0 11h12l4-4" fill="none" stroke="#8fcdea"/></svg></button>
      <hr>
      <button title="Selection list"><svg viewBox="0 0 16 16"><path d="M1 1h14v14H1z" fill="#eee" stroke="#999" stroke-width="1.800"/><path d="M4 5v8l2-2 2 2 1-1-1-2h3zM7 4h6M9 6.500h4" fill="#ddd" stroke="#888" stroke-width=".9"/></svg></button>
      <button title="Saved selection"><svg viewBox="0 0 16 16"><path d="M1 1h14v14H1z" fill="#f6efe4" stroke="#a5301f" stroke-width="1.800"/><path d="M4 4v8l2-2 2 3 1.500-1L8 9h3z" fill="#fff" stroke="#444" stroke-width=".8"/><path d="M8 1h2v4H8zM12 1h2v4h-2zM12 8h2v3h-2z" fill="#c98d84"/></svg></button>
      <button title="Examine histogram"><svg viewBox="0 0 16 16"><path d="M.500.500h4v15h-4z" fill="#7fc489" stroke="#999"/><path d="M1 1h3v4H1z" fill="#e08aa8"/><path d="M1 11h3v4H1z" fill="#73c9c9"/><path d="M6 2h4v2H6zM6 5h7v2H6zM6 8h9v2H6zM6 11h6v2H6z" fill="#ddd" stroke="#888" stroke-width=".7"/></svg></button>
      <hr>
      <button title="Zoom"><svg viewBox="0 0 16 16"><circle cx="8" cy="7.500" r="6" fill="#79bfe2" stroke="#222" stroke-width="2"/><circle cx="6.500" cy="5.500" r="2.500" fill="#cdeaf8"/><path d="M8 14h5l-2 2M12 12l3 3" stroke="#222" stroke-width="1.600" fill="none"/></svg></button>
    </div>

    <!-- View toolbar -->
    <div class="flex w-[23px] shrink-0 flex-col items-start pt-[2px] [&_button]:grid [&_button]:h-5 [&_button]:w-5 [&_button]:place-items-center [&_hr]:my-px [&_hr]:h-[2px] [&_hr]:w-[18px] [&_hr]:border-[#c4c4c4] [&_svg]:size-4 [&_text]:font-['Liberation_Sans'] [&_text]:text-[12px] [&_text]:font-bold">
      <div class="my-px h-[2px] w-[18px] border-t border-dotted border-[#aaa]"></div>
      <button title="+X view"><svg viewBox="0 0 16 16"><use href="#axes"/><path d="M4.500 7h3M6 5.500v3" stroke="#222"/><text x="8" y="11">X</text></svg></button>
      <button title="-X view"><svg viewBox="0 0 16 16"><use href="#axes"/><path d="M4.500 7h3" stroke="#222"/><text x="8" y="11">X</text></svg></button>
      <button title="+Y view"><svg viewBox="0 0 16 16"><use href="#axes"/><path d="M4.500 7h3M6 5.500v3" stroke="#222"/><text x="8" y="11">Y</text></svg></button>
      <button title="-Y view"><svg viewBox="0 0 16 16"><use href="#axes"/><path d="M4.500 7h3" stroke="#222"/><text x="8" y="11">Y</text></svg></button>
      <button title="+Z view"><svg viewBox="0 0 16 16"><use href="#axes"/><path d="M4.500 7h3M6 5.500v3" stroke="#222"/><text x="8" y="11">Z</text></svg></button>
      <button title="-Z view"><svg viewBox="0 0 16 16"><use href="#axes"/><path d="M4.500 7h3" stroke="#222"/><text x="8" y="11">Z</text></svg></button>
      <hr>
      <button title="Normal view"><svg viewBox="0 0 16 16"><use href="#axes"/><text x="6" y="11">n</text><path d="M7 3.500L9.500 1 12 3.500" fill="none" stroke="#222" stroke-width="1.300"/></svg></button>
      <hr>
      <button title="Show models"><svg viewBox="0 0 16 16"><circle cx="8" cy="8" r="7.500" fill="#1d9c95"/><path d="M8 .500v15M1 5h14M1 10h14M4 2q-2 6 0 12M12 2q2 6 0 12" fill="none" stroke="#6fd0ca" stroke-width=".7"/><use href="#eye"/></svg></button>
      <button title="Show quilts"><svg viewBox="0 0 16 16"><path d="M0 9l7-6 9 3-7 7z" fill="#9ccfe4" stroke="#4f91b0"/><use href="#eye"/></svg></button>
      <button title="Show curves"><svg viewBox="0 0 16 16"><path d="M2 10C12 13 10 5 14 3" fill="none" stroke="#43962d" stroke-width="2.500"/><circle cx="14" cy="3" r="2" fill="#43962d"/><use href="#eye"/></svg></button>
      <button title="Show points"><svg viewBox="0 0 16 16"><g fill="#43962d"><circle cx="7" cy="3" r="2"/><circle cx="13" cy="6" r="2"/><circle cx="13" cy="13" r="2"/><circle cx="2" cy="7" r="1.500"/></g><use href="#eye"/></svg></button>
      <button title="Show domains"><svg viewBox="0 0 16 16"><path d="M1 9l7-8 8 7-6 7z" fill="#d668a8" stroke="#a74380"/><use href="#eye"/></svg></button>
      <button title="Show sources"><svg viewBox="0 0 16 16"><path d="M8 1l2 4 5-2-2 4 3 3-5 1-1 4-3-3-5 1 2-4-3-4 4 1z" fill="#edbd24" stroke="#a07f10" stroke-width=".7"/><use href="#eye"/></svg></button>
      <button title="Show grid"><svg viewBox="0 0 16 16"><path d="M0 1h16v13H0z" fill="#c5e2f3"/><path d="M0 2h16M0 5h16M0 8h16M0 11h16M0 14h16M1 1v14M4 1v14M8 1v14M12 1v14M15 1v14" stroke="#1879b4" stroke-width="1.200"/><use href="#eye"/></svg></button>
      <button title="Hide axes"><svg viewBox="0 0 16 16"><path d="M7 2v7l7 4M7 9l7-7" fill="none" stroke="#dda8a2" stroke-width="2"/><use href="#eye-off"/></svg></button>
      <button title="Hide vectors"><svg viewBox="0 0 16 16"><path d="M6 2v8h9M6 10l8-8" fill="none" stroke="#a9c3da" stroke-width="2"/><use href="#eye-off"/></svg></button>
      <button title="Hide blocks"><svg viewBox="0 0 16 16"><path d="M5 4l5-3 5 3v7l-5 3-5-3z" fill="#e9e1b4" stroke="#b9b28a" stroke-width=".8"/><path d="M5 4l5 3 5-3M10 7v7" fill="none" stroke="#b9b28a"/><use href="#eye-off"/></svg></button>
      <button title="Hide grid lines"><svg viewBox="0 0 16 16"><path d="M4 1v14M12 1v14M0 5h16M0 11h16" stroke="#bcbcbc" stroke-width="1.500"/><use href="#eye-off"/></svg></button>
      <hr>
      <div class="my-[2px] h-px w-[18px] border-t border-dotted border-[#aaa]"></div>
      <button title="Run script"><svg viewBox="0 0 16 16"><path d="M1 1l12 7-12 7z" fill="#8d8d8d"/><use href="#scroll"/></svg></button>
      <button title="Stop journal"><svg viewBox="0 0 16 16"><path d="M1 1h11v11H1z" fill="#8d8d8d"/><use href="#scroll"/></svg></button>
      <button title="Open journal"><svg viewBox="0 0 16 16"><path d="M1 3h13v11H1z" fill="#f2f2f2" stroke="#999"/><path d="M7 3v11" stroke="#999"/><use href="#scroll"/></svg></button>
      <button title="Edit script"><svg viewBox="0 0 16 16"><path d="M1 1h14v13H1z" fill="#aaa" stroke="#666" stroke-width="1.500"/><circle cx="7" cy="6" r="3" fill="#ddd" stroke="#555"/><path d="M5 8l-3 4" stroke="#555" stroke-width="1.500"/><use href="#scroll"/></svg></button>
      <button title="Grid script"><svg viewBox="0 0 16 16"><path d="M0 1h15v13H0z" fill="#999"/><path d="M0 5h15M0 9h15M4 1v13M9 1v13" stroke="#ccc"/><use href="#scroll"/></svg></button>
      <button title="Export script"><svg viewBox="0 0 16 16"><path d="M0 9l9-7v12z" fill="#ccc" stroke="#aaa"/><circle cx="11" cy="4" r="2.500" fill="#eee" stroke="#888"/><use href="#scroll"/></svg></button>
    </div>
  </main>

  <!-- Status bar -->
  <footer class="flex h-[29px] shrink-0 border-t-2 border-[#cfcfcf]">
    <div class="flex w-[90px] items-center gap-[3px] border-r border-[#d8d8d8] pl-[3px]">
      <svg class="size-3" viewBox="0 0 12 12"><path d="M4 0h4l4 4v4l-4 4H4L0 8V4z" fill="#8b8b8b"/></svg>
      <div class="grid gap-[3px]">
        <div class="h-2 w-[67px] rounded-[2px] border border-[#b8b8b8] bg-white"></div>
        <div class="h-2 w-[67px] rounded-[2px] border border-[#b8b8b8] bg-white"></div>
      </div>
    </div>
    <div class="w-[55px] border-r border-[#d8d8d8] pt-px pl-1">
      <div class="flex items-center gap-1">
        <svg class="size-[11px]" viewBox="0 0 11 11"><path d="M0 0h11v11H0z" fill="#139a9c"/><path d="M0 3h11M0 6h11M0 9h11M3 0v11M6 0v11M9 0v11" stroke="#52c1c2" stroke-width=".6"/></svg>
        <svg class="size-[10px]" viewBox="0 0 10 10"><path d="M0 3l3-3h7v7l-3 3H0z" fill="#8e130e"/><path d="M0 3h7v7H0z" fill="#c92018"/><path d="M0 3l3-3h7L7 3z" fill="#e5574d"/></svg>
        <b class="font-black text-black">3D</b>
      </div>
      <div class="pt-px pl-[2px]">CGNS</div>
    </div>
    <div class="w-6 border-r border-[#d8d8d8]"></div>
    <div class="flex-1"></div>
    <div class="w-[76px] border-l border-[#dcdcdc]"></div>
    <div class="w-[76px] border-l border-[#dcdcdc]"></div>
    <div class="w-[60px] border-x border-[#dcdcdc]"></div>
    <div class="w-[61px]"></div>
  </footer>
</body>
</html>
